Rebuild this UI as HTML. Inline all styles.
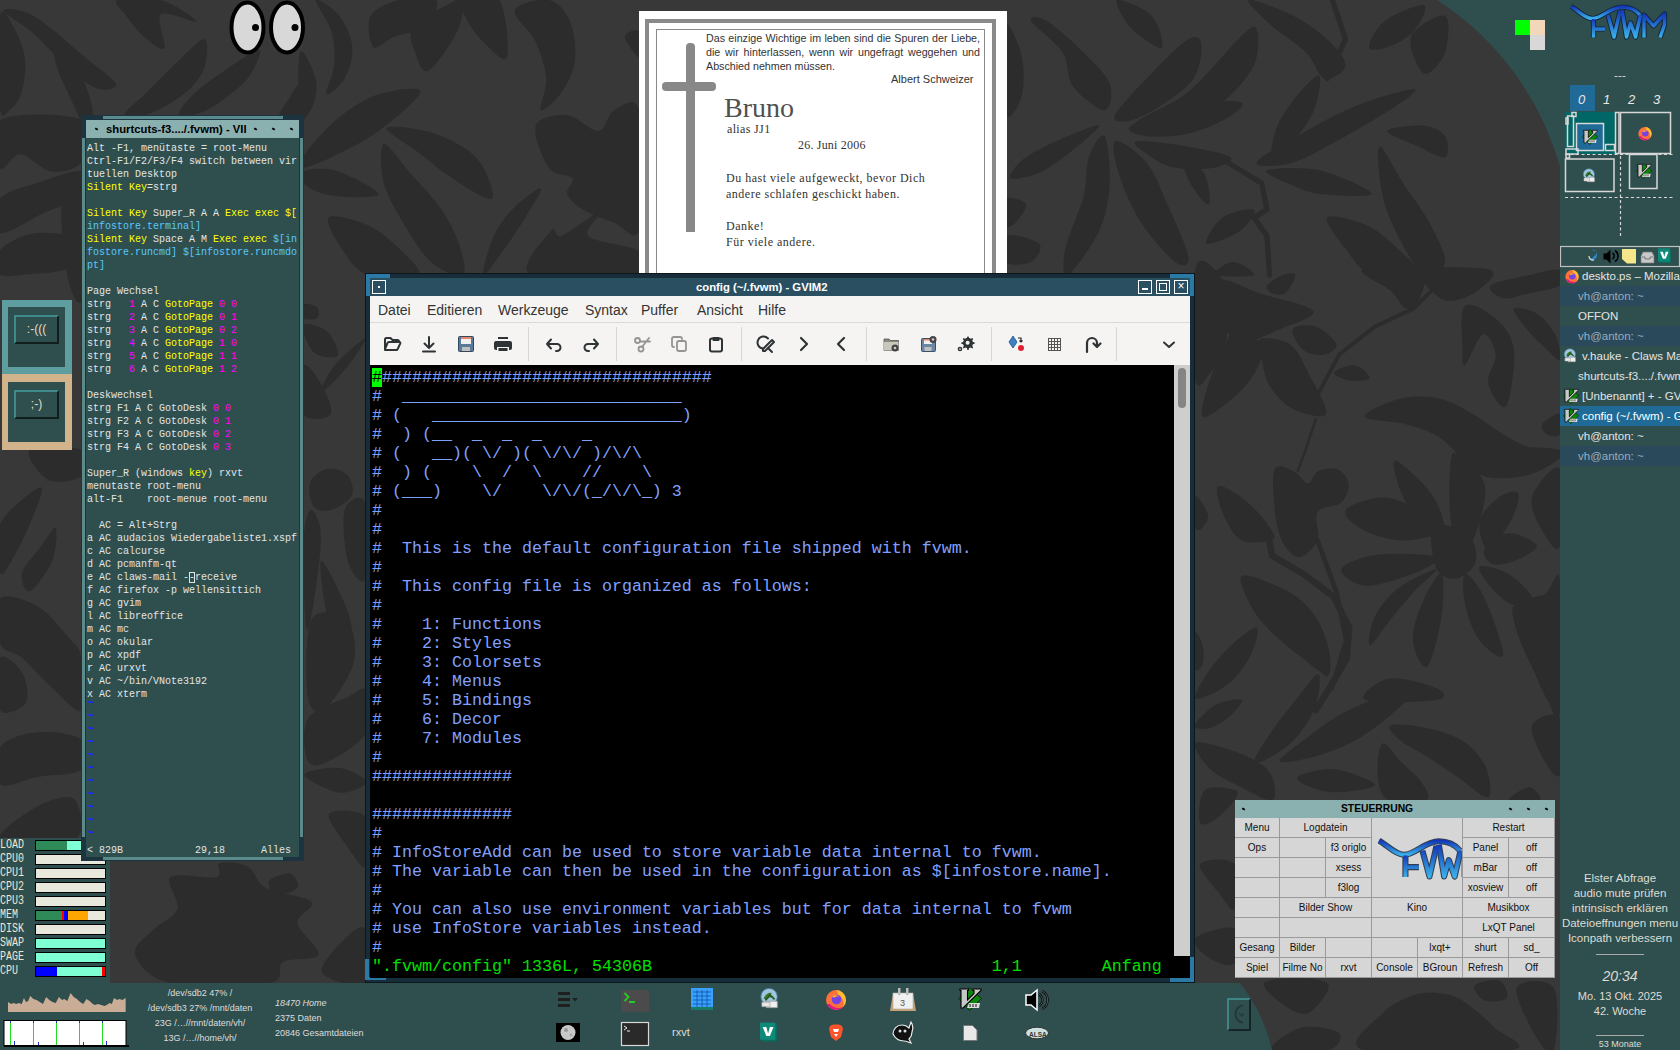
<!DOCTYPE html>
<html><head><meta charset="utf-8">
<style>
*{margin:0;padding:0;box-sizing:border-box}
html,body{width:1680px;height:1050px;overflow:hidden;background:#3a3a3a;font-family:"Liberation Sans",sans-serif}
.a{position:absolute}
i{font-style:normal}
.mono{font-family:"Liberation Mono",monospace}
/* gvim */
#gv{left:365px;top:273px;width:830px;height:710px;background:#172d39;box-shadow:inset 0 0 0 1px #0c161c}
#gvtitle{left:5px;top:5px;width:820px;height:18px;background:#2a4f60;color:#fff;font-weight:bold;font-size:11.3px;line-height:18px;padding-left:326px}
#gvmenu{left:5px;top:23px;width:820px;height:26px;background:#f5f4f2;font-size:14px;color:#333}
#gvmenu span{position:absolute;top:6px}
#gvtool{left:5px;top:49px;width:820px;height:43px;background:#f5f4f2;border-top:1px solid #dcdad6}
#gvtext{left:5px;top:92px;width:820px;height:613px;background:#000;color:#80a0ff;font-size:16.67px;line-height:19px;white-space:pre;padding:3px 0 0 2px;overflow:hidden}
#gvtext .cur{background:#00ff00;color:#000}
#gvtext .st{color:#00e000}
#gvscroll{left:809px;top:92px;width:16px;height:591px;background:#cecece}
/* terminal */
#tm{left:81px;top:115px;width:223px;height:746px;background:#1c3440}
#tmtitle{left:5px;top:5px;width:213px;height:18px;background:#8ab0b0;color:#000;font-weight:bold;font-size:11.3px;line-height:18px}
.tick{top:8px;width:3px;height:2px;background:#000;transform:rotate(30deg)}
#tmtext{left:5px;top:23px;width:213px;height:719px;background:#2f4f4f;color:#e4e4e4;font-size:10px;line-height:13px;white-space:pre;padding:4px 0 0 1px;overflow:hidden}
#tmtext .y{color:#ffff00}
#tmtext .c{color:#58c8ff}
#tmtext .m{color:#ff00ff}
#tmtext .b{color:#1e28ff;position:relative;top:-3px;font-weight:bold;font-size:12px}
#tmtext .tc{outline:1px solid #e4e4e4;outline-offset:-1px}
.sm{font-size:10px}
.lbl{font-family:"Liberation Mono",monospace;color:#efe6d0;font-size:13px;line-height:14px;transform:scaleX(0.77);transform-origin:0 0}
.bar{position:absolute;left:35px;width:71px;height:11px;border:1px solid #000;background:#e8e8dc}
/* steuerrung */
#st{left:1235px;top:800px;width:320px;height:178px;background:#a9a9a9}
#sttitle{left:0;top:0;width:320px;height:18px;background:#8ab0b0;color:#000;font-weight:bold;font-size:10.3px;line-height:18px;padding-left:106px}
.sb{position:absolute;background:#d6d6d6;border-right:1px solid #9a9a9a;border-bottom:1px solid #9a9a9a;font-size:10px;color:#111;text-align:center;line-height:19px;white-space:nowrap;overflow:hidden}
/* task list */
.tk{position:absolute;left:1560px;width:120px;height:20px;font-size:11.5px;line-height:20px;color:#e4e4e4;white-space:nowrap;overflow:hidden}
.rt{position:absolute;left:1560px;width:120px;text-align:center;color:#dedcd2;font-size:11.5px;white-space:nowrap;overflow:hidden}
</style></head><body>
<svg width="0" height="0" style="position:absolute">
<defs>
<symbol id="vim" viewBox="0 0 24 24">
<path d="M11.5,0.5 L23.5,11.5 L11.5,23.5 L0.5,11.5 Z" fill="#0a860a" stroke="#111" stroke-width="0.8"/>
<path d="M2,2 H10.5 V3.5 H9.5 V13 L16,6.5 V3.5 H15 V2 H23 V3.5 L5,21 H3 V3.5 H2 Z" fill="#c8c8c8" stroke="#000" stroke-width="1.1" stroke-linejoin="miter"/>
<path d="M11,16 H22 L21,21 H9 Z" fill="#ddd"/>
<path d="M12,17 v3 M15,17 v3 M18,17 v3" stroke="#111" stroke-width="1"/>
</symbol>
<symbol id="ffx" viewBox="0 0 24 24">
<circle cx="12" cy="13" r="10" fill="#ff7139"/>
<path d="M12,3 a10,10 0 0 1 10,10 a10,10 0 0 1 -3,7 c2,-5 -1,-11 -5,-12 c0,-2 -1,-4 -2,-5 z" fill="#ffbd2e"/>
<path d="M3,17 a10,10 0 0 0 16,3 c-4,2 -10,1 -13,-3 z" fill="#e31587"/>
<circle cx="12.5" cy="12.5" r="4.8" fill="#7542e5"/>
<path d="M8,9 c3,-2 6,-1 7,1 c-2,-1 -4,0 -5,1 z" fill="#ffa436"/>
</symbol>
<symbol id="claws" viewBox="0 0 24 24">
<circle cx="11" cy="10" r="9" fill="#9ec6e0" stroke="#4a7a9a" stroke-width="1"/>
<path d="M5,12 c2,-5 6,-7 9,-6 c-2,2 -1,4 2,4 c-3,1 -6,0 -8,3 z" fill="#3a7a2a"/>
<path d="M7,14 l5,-6 l5,5" fill="none" stroke="#2a5a20" stroke-width="2"/>
<path d="M8,15 h12 v7 h-12 z" fill="#f0f0f0" stroke="#999" stroke-width="0.8"/>
<path d="M3,16 h9 v5 h-9 z" fill="#e8e8e8" stroke="#888" stroke-width="0.6"/>
</symbol>
<symbol id="vicon" viewBox="0 0 20 22">
<rect x="2" y="2" width="17" height="19" fill="#0b6b5e"/>
<rect x="0" y="0" width="17" height="19" fill="#108a78"/>
<path d="M3,5 h4 l2,7 l2,-7 h4 l-4,10 h-4 z" fill="#fff"/>
</symbol>
</defs>
</svg>

<svg class="a" style="left:0;top:0" width="1680" height="1050" viewBox="0 0 1680 1050">
<rect width="1680" height="1050" fill="#383838"/>
<g id="pattern" fill="#2c2c2c"><g transform="translate(1195,270) scale(0.257136)"><path d="M90.0,40.0 C113.3,21.7 188.3,70.0 250.0,90.0 C311.7,110.0 446.7,136.7 460.0,160.0 C473.3,183.3 376.7,210.0 330.0,230.0 C283.3,250.0 216.7,285.0 180.0,280.0 C143.3,275.0 125.0,240.0 110.0,200.0 C95.0,160.0 66.7,58.3 90.0,40.0Z"/><path d="M160.0,230.0 C186.7,225.0 250.0,268.3 260.0,300.0 C270.0,331.7 243.3,383.3 220.0,420.0 C196.7,456.7 151.7,495.0 120.0,520.0 C88.3,545.0 41.7,581.7 30.0,570.0 C18.3,558.3 38.3,490.0 50.0,450.0 C61.7,410.0 81.7,366.7 100.0,330.0 C118.3,293.3 133.3,235.0 160.0,230.0Z"/><path d="M250.0,270.0 C268.3,260.0 338.3,268.3 370.0,290.0 C401.7,311.7 416.7,355.0 440.0,400.0 C463.3,445.0 520.0,536.7 510.0,560.0 C500.0,583.3 416.7,558.3 380.0,540.0 C343.3,521.7 310.0,481.7 290.0,450.0 C270.0,418.3 266.7,380.0 260.0,350.0 C253.3,320.0 231.7,280.0 250.0,270.0Z"/><path d="M380.0,230.0 C388.3,215.0 441.7,210.0 470.0,220.0 C498.3,230.0 545.0,271.7 550.0,290.0 C555.0,308.3 521.7,326.7 500.0,330.0 C478.3,333.3 440.0,326.7 420.0,310.0 C400.0,293.3 371.7,245.0 380.0,230.0Z"/><path d="M0.0,0.0 C13.3,-70.0 58.3,-20.0 80.0,0.0 C101.7,20.0 123.3,73.3 130.0,120.0 C136.7,166.7 131.7,233.3 120.0,280.0 C108.3,326.7 80.0,376.7 60.0,400.0 C40.0,423.3 10.0,486.7 0.0,420.0 C-10.0,353.3 -13.3,70.0 0.0,0.0Z"/><path d="M280.0,60.0 C286.7,48.3 321.7,26.7 340.0,20.0 C358.3,13.3 388.3,8.3 390.0,20.0 C391.7,31.7 365.0,78.3 350.0,90.0 C335.0,101.7 311.7,95.0 300.0,90.0 C288.3,85.0 273.3,71.7 280.0,60.0Z"/><path d="M540.0,400.0 C543.3,390.0 596.7,366.7 620.0,370.0 C643.3,373.3 683.3,410.0 680.0,420.0 C676.7,430.0 623.3,433.3 600.0,430.0 C576.7,426.7 536.7,410.0 540.0,400.0Z"/><path d="M650.0,0.0 C670.0,-13.3 843.3,-20.0 880.0,0.0 C916.7,20.0 880.0,95.0 870.0,120.0 C860.0,145.0 838.3,156.7 820.0,150.0 C801.7,143.3 788.3,105.0 760.0,80.0 C731.7,55.0 630.0,13.3 650.0,0.0Z"/><path d="M880.0,0.0 C916.7,-15.0 1113.3,-13.3 1150.0,0.0 C1186.7,13.3 1125.0,60.0 1100.0,80.0 C1075.0,100.0 1028.3,118.3 1000.0,120.0 C971.7,121.7 950.0,110.0 930.0,90.0 C910.0,70.0 843.3,15.0 880.0,0.0Z"/><path d="M1150.0,60.0 C1166.7,45.0 1255.0,30.0 1300.0,20.0 C1345.0,10.0 1400.0,-6.7 1420.0,0.0 C1440.0,6.7 1440.0,45.0 1420.0,60.0 C1400.0,75.0 1336.7,81.7 1300.0,90.0 C1263.3,98.3 1225.0,115.0 1200.0,110.0 C1175.0,105.0 1133.3,75.0 1150.0,60.0Z"/><path d="M1050.0,140.0 C1071.7,121.7 1138.3,161.7 1170.0,190.0 C1201.7,218.3 1233.3,253.3 1240.0,310.0 C1246.7,366.7 1226.7,508.3 1210.0,530.0 C1193.3,551.7 1146.7,473.3 1140.0,440.0 C1133.3,406.7 1173.3,361.7 1170.0,330.0 C1166.7,298.3 1140.0,243.3 1120.0,250.0 C1100.0,256.7 1063.3,361.7 1050.0,370.0 C1036.7,378.3 1040.0,338.3 1040.0,300.0 C1040.0,261.7 1028.3,158.3 1050.0,140.0Z"/><path d="M1240.0,150.0 C1246.7,140.0 1303.3,153.3 1330.0,170.0 C1356.7,186.7 1385.0,220.0 1400.0,250.0 C1415.0,280.0 1426.7,341.7 1420.0,350.0 C1413.3,358.3 1381.7,320.0 1360.0,300.0 C1338.3,280.0 1310.0,255.0 1290.0,230.0 C1270.0,205.0 1233.3,160.0 1240.0,150.0Z"/><path d="M660.0,570.0 C656.7,553.3 751.7,511.7 800.0,500.0 C848.3,488.3 903.3,490.0 950.0,500.0 C996.7,510.0 1038.3,536.7 1080.0,560.0 C1121.7,583.3 1163.3,618.3 1200.0,640.0 C1236.7,661.7 1266.7,680.0 1300.0,690.0 C1333.3,700.0 1400.0,688.3 1400.0,700.0 C1400.0,711.7 1341.7,745.0 1300.0,760.0 C1258.3,775.0 1191.7,793.3 1150.0,790.0 C1108.3,786.7 1083.3,763.3 1050.0,740.0 C1016.7,716.7 988.3,673.3 950.0,650.0 C911.7,626.7 868.3,613.3 820.0,600.0 C771.7,586.7 663.3,586.7 660.0,570.0Z"/><path d="M1350.0,600.0 C1358.3,586.7 1408.3,553.3 1420.0,560.0 C1431.7,566.7 1428.3,626.7 1420.0,640.0 C1411.7,653.3 1381.7,646.7 1370.0,640.0 C1358.3,633.3 1341.7,613.3 1350.0,600.0Z"/><path d="M90.0,840.0 C105.0,831.7 166.7,873.3 200.0,900.0 C233.3,926.7 273.3,975.0 290.0,1000.0 C306.7,1025.0 318.3,1041.7 300.0,1050.0 C281.7,1058.3 211.7,1066.7 180.0,1050.0 C148.3,1033.3 125.0,985.0 110.0,950.0 C95.0,915.0 75.0,848.3 90.0,840.0Z"/><path d="M0.0,880.0 C8.3,871.7 45.0,930.0 50.0,950.0 C55.0,970.0 38.3,991.7 30.0,1000.0 C21.7,1008.3 5.0,1020.0 0.0,1000.0 C-5.0,980.0 -8.3,888.3 0.0,880.0Z"/><path d="M480,480 L560,330 L700,220 L850,150 L940,60 L1000,0" fill="none" stroke="#2c2c2c" stroke-width="15" stroke-linecap="round" stroke-linejoin="round"/><path d="M470,580 L430,700 L400,780" fill="none" stroke="#2c2c2c" stroke-width="10" stroke-linecap="round" stroke-linejoin="round"/></g>
<g transform="translate(1195,530) scale(0.257136)"><path d="M1240.0,300.0 C1250.0,258.3 1330.0,266.7 1360.0,250.0 C1390.0,233.3 1410.0,125.0 1420.0,200.0 C1430.0,275.0 1428.3,623.3 1420.0,700.0 C1411.7,776.7 1390.0,693.3 1370.0,660.0 C1350.0,626.7 1321.7,560.0 1300.0,500.0 C1278.3,440.0 1230.0,341.7 1240.0,300.0Z"/><path d="M180.0,180.0 C193.3,165.0 260.0,193.3 300.0,210.0 C340.0,226.7 386.7,248.3 420.0,280.0 C453.3,311.7 483.3,353.3 500.0,400.0 C516.7,446.7 533.3,543.3 520.0,560.0 C506.7,576.7 456.7,526.7 420.0,500.0 C383.3,473.3 333.3,433.3 300.0,400.0 C266.7,366.7 240.0,336.7 220.0,300.0 C200.0,263.3 166.7,195.0 180.0,180.0Z"/><path d="M0.0,650.0 C0.0,633.3 35.0,575.0 60.0,540.0 C85.0,505.0 120.0,466.7 150.0,440.0 C180.0,413.3 228.3,373.3 240.0,380.0 C251.7,386.7 235.0,446.7 220.0,480.0 C205.0,513.3 176.7,553.3 150.0,580.0 C123.3,606.7 85.0,628.3 60.0,640.0 C35.0,651.7 0.0,666.7 0.0,650.0Z"/><path d="M0.0,400.0 C5.0,385.0 25.0,430.0 30.0,450.0 C35.0,470.0 35.0,505.0 30.0,520.0 C25.0,535.0 5.0,560.0 0.0,540.0 C-5.0,520.0 -5.0,415.0 0.0,400.0Z"/><path d="M0.0,760.0 C3.3,745.0 50.0,696.7 80.0,680.0 C110.0,663.3 170.0,653.3 180.0,660.0 C190.0,666.7 160.0,701.7 140.0,720.0 C120.0,738.3 83.3,763.3 60.0,770.0 C36.7,776.7 -3.3,775.0 0.0,760.0Z"/><path d="M480.0,560.0 C491.7,565.0 483.3,640.0 470.0,680.0 C456.7,720.0 428.3,766.7 400.0,800.0 C371.7,833.3 328.3,863.3 300.0,880.0 C271.7,896.7 230.0,916.7 230.0,900.0 C230.0,883.3 271.7,821.7 300.0,780.0 C328.3,738.3 370.0,686.7 400.0,650.0 C430.0,613.3 468.3,555.0 480.0,560.0Z"/><path d="M870.0,610.0 C863.3,598.3 771.7,631.7 720.0,650.0 C668.3,668.3 610.0,691.7 560.0,720.0 C510.0,748.3 458.3,790.0 420.0,820.0 C381.7,850.0 321.7,890.0 330.0,900.0 C338.3,910.0 421.7,893.3 470.0,880.0 C518.3,866.7 571.7,846.7 620.0,820.0 C668.3,793.3 718.3,755.0 760.0,720.0 C801.7,685.0 876.7,621.7 870.0,610.0Z"/><path d="M0.0,830.0 C10.0,816.7 80.0,838.3 120.0,850.0 C160.0,861.7 210.0,881.7 240.0,900.0 C270.0,918.3 290.0,935.0 300.0,960.0 C310.0,985.0 320.0,1043.3 300.0,1050.0 C280.0,1056.7 220.0,1020.0 180.0,1000.0 C140.0,980.0 90.0,958.3 60.0,930.0 C30.0,901.7 -10.0,843.3 0.0,830.0Z"/><path d="M400.0,960.0 C415.0,948.3 490.0,925.0 540.0,930.0 C590.0,935.0 696.7,975.0 700.0,990.0 C703.3,1005.0 601.7,1018.3 560.0,1020.0 C518.3,1021.7 476.7,1010.0 450.0,1000.0 C423.3,990.0 385.0,971.7 400.0,960.0Z"/><path d="M730.0,830.0 C745.0,821.7 775.0,875.0 800.0,900.0 C825.0,925.0 863.3,955.0 880.0,980.0 C896.7,1005.0 921.7,1038.3 900.0,1050.0 C878.3,1061.7 781.7,1066.7 750.0,1050.0 C718.3,1033.3 713.3,986.7 710.0,950.0 C706.7,913.3 715.0,838.3 730.0,830.0Z"/><path d="M760.0,760.0 C776.7,751.7 853.3,760.0 900.0,770.0 C946.7,780.0 1001.7,795.0 1040.0,820.0 C1078.3,845.0 1113.3,883.3 1130.0,920.0 C1146.7,956.7 1158.3,1033.3 1140.0,1040.0 C1121.7,1046.7 1060.0,986.7 1020.0,960.0 C980.0,933.3 936.7,903.3 900.0,880.0 C863.3,856.7 823.3,840.0 800.0,820.0 C776.7,800.0 743.3,768.3 760.0,760.0Z"/><path d="M1310.0,760.0 C1320.0,731.7 1401.7,698.3 1420.0,730.0 C1438.3,761.7 1430.0,921.7 1420.0,950.0 C1410.0,978.3 1378.3,931.7 1360.0,900.0 C1341.7,868.3 1300.0,788.3 1310.0,760.0Z"/><path d="M1220.0,1050.0 C1213.3,1041.7 1280.0,1000.0 1300.0,1000.0 C1320.0,1000.0 1353.3,1041.7 1340.0,1050.0 C1326.7,1058.3 1226.7,1058.3 1220.0,1050.0Z"/><path d="M280,0 L300,100 L420,170 L540,260 L600,380 L590,500 L520,620 L470,700" fill="none" stroke="#2c2c2c" stroke-width="25" stroke-linecap="round" stroke-linejoin="round"/></g>
<g transform="translate(1005,0) scale(0.261917)"><path d="M420.0,440.0 C433.3,410.0 513.3,328.3 560.0,280.0 C606.7,231.7 668.3,168.3 700.0,150.0 C731.7,131.7 746.7,145.0 750.0,170.0 C753.3,195.0 745.0,261.7 720.0,300.0 C695.0,338.3 640.0,373.3 600.0,400.0 C560.0,426.7 510.0,453.3 480.0,460.0 C450.0,466.7 406.7,470.0 420.0,440.0Z"/><path d="M500.0,470.0 C508.3,446.7 633.3,405.0 700.0,350.0 C766.7,295.0 856.7,180.0 900.0,140.0 C943.3,100.0 951.7,91.7 960.0,110.0 C968.3,128.3 973.3,201.7 950.0,250.0 C926.7,298.3 870.0,360.0 820.0,400.0 C770.0,440.0 703.3,478.3 650.0,490.0 C596.7,501.7 491.7,493.3 500.0,470.0Z"/><path d="M480.0,480.0 C506.7,460.0 630.0,415.0 700.0,400.0 C770.0,385.0 875.0,381.7 900.0,390.0 C925.0,398.3 883.3,430.0 850.0,450.0 C816.7,470.0 751.7,498.3 700.0,510.0 C648.3,521.7 576.7,525.0 540.0,520.0 C503.3,515.0 453.3,500.0 480.0,480.0Z"/><path d="M500.0,540.0 C523.3,533.3 640.0,550.0 700.0,560.0 C760.0,570.0 843.3,586.7 860.0,600.0 C876.7,613.3 835.0,633.3 800.0,640.0 C765.0,646.7 690.0,646.7 650.0,640.0 C610.0,633.3 585.0,616.7 560.0,600.0 C535.0,583.3 476.7,546.7 500.0,540.0Z"/><path d="M420.0,540.0 C436.7,530.0 506.7,580.0 540.0,620.0 C573.3,660.0 593.3,720.0 620.0,780.0 C646.7,840.0 695.0,943.3 700.0,980.0 C705.0,1016.7 680.0,1021.7 650.0,1000.0 C620.0,978.3 555.0,903.3 520.0,850.0 C485.0,796.7 456.7,731.7 440.0,680.0 C423.3,628.3 403.3,550.0 420.0,540.0Z"/><path d="M380.0,520.0 C393.3,536.7 403.3,640.0 400.0,700.0 C396.7,760.0 386.7,821.7 360.0,880.0 C333.3,938.3 261.7,1038.3 240.0,1050.0 C218.3,1061.7 220.0,1000.0 230.0,950.0 C240.0,900.0 285.0,808.3 300.0,750.0 C315.0,691.7 306.7,638.3 320.0,600.0 C333.3,561.7 366.7,503.3 380.0,520.0Z"/><path d="M360.0,480.0 C361.7,490.0 288.3,550.0 250.0,580.0 C211.7,610.0 168.3,643.3 130.0,660.0 C91.7,676.7 28.3,690.0 20.0,680.0 C11.7,670.0 43.3,626.7 80.0,600.0 C116.7,573.3 193.3,540.0 240.0,520.0 C286.7,500.0 358.3,470.0 360.0,480.0Z"/><path d="M380.0,420.0 C356.7,421.7 286.7,366.7 260.0,330.0 C233.3,293.3 246.7,241.7 220.0,200.0 C193.3,158.3 110.0,100.0 100.0,80.0 C90.0,60.0 126.7,60.0 160.0,80.0 C193.3,100.0 260.0,160.0 300.0,200.0 C340.0,240.0 386.7,283.3 400.0,320.0 C413.3,356.7 403.3,418.3 380.0,420.0Z"/><path d="M430.0,0.0 C446.7,-3.3 531.7,30.0 560.0,60.0 C588.3,90.0 606.7,166.7 600.0,180.0 C593.3,193.3 543.3,156.7 520.0,140.0 C496.7,123.3 475.0,103.3 460.0,80.0 C445.0,56.7 413.3,3.3 430.0,0.0Z"/><path d="M0.0,100.0 C10.0,63.3 48.3,161.7 60.0,200.0 C71.7,238.3 73.3,293.3 70.0,330.0 C66.7,366.7 51.7,405.0 40.0,420.0 C28.3,435.0 6.7,473.3 0.0,420.0 C-6.7,366.7 -10.0,136.7 0.0,100.0Z"/><path d="M0.0,760.0 C13.3,746.7 73.3,765.0 80.0,780.0 C86.7,795.0 53.3,836.7 40.0,850.0 C26.7,863.3 6.7,875.0 0.0,860.0 C-6.7,845.0 -13.3,773.3 0.0,760.0Z"/><path d="M0.0,900.0 C21.7,888.3 113.3,913.3 130.0,930.0 C146.7,946.7 121.7,988.3 100.0,1000.0 C78.3,1011.7 16.7,1016.7 0.0,1000.0 C-16.7,983.3 -21.7,911.7 0.0,900.0Z"/><path d="M960.0,620.0 C968.3,600.0 1085.0,536.7 1150.0,500.0 C1215.0,463.3 1281.7,426.7 1350.0,400.0 C1418.3,373.3 1535.0,340.0 1560.0,340.0 C1585.0,340.0 1543.3,370.0 1500.0,400.0 C1456.7,430.0 1366.7,483.3 1300.0,520.0 C1233.3,556.7 1156.7,603.3 1100.0,620.0 C1043.3,636.7 951.7,640.0 960.0,620.0Z"/><path d="M1200.0,290.0 C1210.0,300.0 1196.7,378.3 1180.0,420.0 C1163.3,461.7 1126.7,510.0 1100.0,540.0 C1073.3,570.0 1030.0,610.0 1020.0,600.0 C1010.0,590.0 1023.3,520.0 1040.0,480.0 C1056.7,440.0 1093.3,391.7 1120.0,360.0 C1146.7,328.3 1190.0,280.0 1200.0,290.0Z"/><path d="M930.0,0.0 C943.3,-6.7 1050.0,35.0 1100.0,60.0 C1150.0,85.0 1196.7,118.3 1230.0,150.0 C1263.3,181.7 1301.7,225.0 1300.0,250.0 C1298.3,275.0 1245.0,308.3 1220.0,300.0 C1195.0,291.7 1183.3,233.3 1150.0,200.0 C1116.7,166.7 1056.7,133.3 1020.0,100.0 C983.3,66.7 916.7,6.7 930.0,0.0Z"/><path d="M1390.0,180.0 C1388.3,163.3 1415.0,106.7 1450.0,80.0 C1485.0,53.3 1581.7,13.3 1600.0,20.0 C1618.3,26.7 1583.3,93.3 1560.0,120.0 C1536.7,146.7 1488.3,170.0 1460.0,180.0 C1431.7,190.0 1391.7,196.7 1390.0,180.0Z"/><path d="M1550.0,140.0 C1563.3,103.3 1658.3,50.0 1680.0,60.0 C1701.7,70.0 1693.3,163.3 1680.0,200.0 C1666.7,236.7 1621.7,290.0 1600.0,280.0 C1578.3,270.0 1536.7,176.7 1550.0,140.0Z"/><path d="M1430.0,560.0 C1443.3,553.3 1488.3,651.7 1520.0,700.0 C1551.7,748.3 1593.3,800.0 1620.0,850.0 C1646.7,900.0 1683.3,966.7 1680.0,1000.0 C1676.7,1033.3 1630.0,1066.7 1600.0,1050.0 C1570.0,1033.3 1526.7,951.7 1500.0,900.0 C1473.3,848.3 1451.7,796.7 1440.0,740.0 C1428.3,683.3 1416.7,566.7 1430.0,560.0Z"/><path d="M1230.0,830.0 C1243.3,815.0 1335.0,840.0 1380.0,860.0 C1425.0,880.0 1466.7,918.3 1500.0,950.0 C1533.3,981.7 1596.7,1033.3 1580.0,1050.0 C1563.3,1066.7 1446.7,1066.7 1400.0,1050.0 C1353.3,1033.3 1328.3,986.7 1300.0,950.0 C1271.7,913.3 1216.7,845.0 1230.0,830.0Z"/><path d="M1000.0,650.0 C1020.0,641.7 1133.3,635.0 1200.0,650.0 C1266.7,665.0 1400.0,725.0 1400.0,740.0 C1400.0,755.0 1253.3,746.7 1200.0,740.0 C1146.7,733.3 1113.3,715.0 1080.0,700.0 C1046.7,685.0 980.0,658.3 1000.0,650.0Z"/><path d="M1460.0,500.0 C1463.3,486.7 1563.3,476.7 1600.0,480.0 C1636.7,483.3 1666.7,500.0 1680.0,520.0 C1693.3,540.0 1696.7,593.3 1680.0,600.0 C1663.3,606.7 1616.7,576.7 1580.0,560.0 C1543.3,543.3 1456.7,513.3 1460.0,500.0Z"/><path d="M770.0,930.0 C758.3,921.7 800.0,851.7 830.0,830.0 C860.0,808.3 938.3,791.7 950.0,800.0 C961.7,808.3 930.0,858.3 900.0,880.0 C870.0,901.7 781.7,938.3 770.0,930.0Z"/><path d="M680.0,620.0 C686.7,610.0 743.3,633.3 760.0,660.0 C776.7,686.7 786.7,770.0 780.0,780.0 C773.3,790.0 736.7,746.7 720.0,720.0 C703.3,693.3 673.3,630.0 680.0,620.0Z"/><path d="M800.0,1050.0 C786.7,1041.7 845.0,1000.0 870.0,1000.0 C895.0,1000.0 961.7,1041.7 950.0,1050.0 C938.3,1058.3 813.3,1058.3 800.0,1050.0Z"/><path d="M1250,0 L1300,150 L1230,300" fill="none" stroke="#2c2c2c" stroke-width="20" stroke-linecap="round" stroke-linejoin="round"/><path d="M850,620 L980,700 L1000,800 L950,830 L1000,900 L1010,1050" fill="none" stroke="#2c2c2c" stroke-width="20" stroke-linecap="round" stroke-linejoin="round"/></g>
<g transform="translate(300,0) scale(0.261917)"><path d="M60.0,0.0 C65.0,-10.0 126.7,30.0 150.0,60.0 C173.3,90.0 196.7,140.0 200.0,180.0 C203.3,220.0 186.7,270.0 170.0,300.0 C153.3,330.0 106.7,368.3 100.0,360.0 C93.3,351.7 126.7,290.0 130.0,250.0 C133.3,210.0 131.7,161.7 120.0,120.0 C108.3,78.3 55.0,10.0 60.0,0.0Z"/><path d="M0.0,200.0 C10.0,175.0 51.7,266.7 60.0,300.0 C68.3,333.3 60.0,375.0 50.0,400.0 C40.0,425.0 8.3,483.3 0.0,450.0 C-8.3,416.7 -10.0,225.0 0.0,200.0Z"/><path d="M270.0,60.0 C286.7,30.0 338.3,10.0 380.0,0.0 C421.7,-10.0 503.3,-16.7 520.0,0.0 C536.7,16.7 506.7,76.7 480.0,100.0 C453.3,123.3 393.3,126.7 360.0,140.0 C326.7,153.3 295.0,193.3 280.0,180.0 C265.0,166.7 253.3,90.0 270.0,60.0Z"/><path d="M430.0,100.0 C450.0,70.0 528.3,36.7 560.0,20.0 C591.7,3.3 613.3,-16.7 620.0,0.0 C626.7,16.7 621.7,75.0 600.0,120.0 C578.3,165.0 516.7,256.7 490.0,270.0 C463.3,283.3 450.0,228.3 440.0,200.0 C430.0,171.7 410.0,130.0 430.0,100.0Z"/><path d="M620.0,0.0 C640.0,-13.3 731.7,-36.7 760.0,0.0 C788.3,36.7 800.0,193.3 790.0,220.0 C780.0,246.7 725.0,183.3 700.0,160.0 C675.0,136.7 653.3,106.7 640.0,80.0 C626.7,53.3 600.0,13.3 620.0,0.0Z"/><path d="M820.0,40.0 C828.3,13.3 915.0,-6.7 950.0,0.0 C985.0,6.7 1013.3,41.7 1030.0,80.0 C1046.7,118.3 1055.0,185.0 1050.0,230.0 C1045.0,275.0 1021.7,318.3 1000.0,350.0 C978.3,381.7 930.0,428.3 920.0,420.0 C910.0,411.7 943.3,343.3 940.0,300.0 C936.7,256.7 920.0,203.3 900.0,160.0 C880.0,116.7 811.7,66.7 820.0,40.0Z"/><path d="M1240.0,140.0 C1240.0,123.3 1288.3,106.7 1298.0,120.0 C1307.7,133.3 1307.7,216.7 1298.0,220.0 C1288.3,223.3 1240.0,156.7 1240.0,140.0Z"/><path d="M460.0,350.0 C460.0,326.7 350.0,345.0 300.0,360.0 C250.0,375.0 203.3,406.7 160.0,440.0 C116.7,473.3 66.7,526.7 40.0,560.0 C13.3,593.3 -13.3,633.3 0.0,640.0 C13.3,646.7 70.0,623.3 120.0,600.0 C170.0,576.7 243.3,541.7 300.0,500.0 C356.7,458.3 460.0,373.3 460.0,350.0Z"/><path d="M330.0,490.0 C335.0,476.7 431.7,488.3 480.0,500.0 C528.3,511.7 583.3,536.7 620.0,560.0 C656.7,583.3 681.7,606.7 700.0,640.0 C718.3,673.3 750.0,753.3 730.0,760.0 C710.0,766.7 626.7,710.0 580.0,680.0 C533.3,650.0 491.7,611.7 450.0,580.0 C408.3,548.3 325.0,503.3 330.0,490.0Z"/><path d="M0.0,660.0 C15.0,648.3 80.0,636.7 130.0,650.0 C180.0,663.3 296.7,723.3 300.0,740.0 C303.3,756.7 193.3,753.3 150.0,750.0 C106.7,746.7 65.0,735.0 40.0,720.0 C15.0,705.0 -15.0,671.7 0.0,660.0Z"/><path d="M320.0,550.0 C336.7,543.3 383.3,618.3 420.0,660.0 C456.7,701.7 508.3,753.3 540.0,800.0 C571.7,846.7 596.7,898.3 610.0,940.0 C623.3,981.7 638.3,1040.0 620.0,1050.0 C601.7,1060.0 536.7,1031.7 500.0,1000.0 C463.3,968.3 430.0,910.0 400.0,860.0 C370.0,810.0 333.3,751.7 320.0,700.0 C306.7,648.3 303.3,556.7 320.0,550.0Z"/><path d="M110.0,830.0 C126.7,815.0 213.3,838.3 260.0,860.0 C306.7,881.7 358.3,928.3 390.0,960.0 C421.7,991.7 471.7,1035.0 450.0,1050.0 C428.3,1065.0 308.3,1066.7 260.0,1050.0 C211.7,1033.3 185.0,986.7 160.0,950.0 C135.0,913.3 93.3,845.0 110.0,830.0Z"/><path d="M900.0,480.0 C911.7,446.7 980.0,436.7 1020.0,440.0 C1060.0,443.3 1110.0,503.3 1140.0,500.0 C1170.0,496.7 1173.7,431.7 1200.0,420.0 C1226.3,408.3 1281.7,355.0 1298.0,430.0 C1314.3,505.0 1314.3,800.0 1298.0,870.0 C1281.7,940.0 1236.3,861.7 1200.0,850.0 C1163.7,838.3 1110.0,818.3 1080.0,800.0 C1050.0,781.7 1026.7,760.0 1020.0,740.0 C1013.3,720.0 1051.7,696.7 1040.0,680.0 C1028.3,663.3 973.3,673.3 950.0,640.0 C926.7,606.7 888.3,513.3 900.0,480.0Z"/><path d="M920.0,720.0 C926.7,726.7 883.3,791.7 860.0,830.0 C836.7,868.3 806.7,913.3 780.0,950.0 C753.3,986.7 706.7,1058.3 700.0,1050.0 C693.3,1041.7 720.0,943.3 740.0,900.0 C760.0,856.7 790.0,820.0 820.0,790.0 C850.0,760.0 913.3,713.3 920.0,720.0Z"/><path d="M880.0,1050.0 C823.7,1021.7 940.0,905.0 960.0,880.0 C980.0,855.0 966.7,913.3 1000.0,900.0 C1033.3,886.7 1143.3,800.0 1160.0,800.0 C1176.7,800.0 1077.0,873.3 1100.0,900.0 C1123.0,926.7 1265.0,935.0 1298.0,960.0 C1331.0,985.0 1367.7,1035.0 1298.0,1050.0 C1228.3,1065.0 936.3,1078.3 880.0,1050.0Z"/></g>
<g transform="translate(0,0) scale(0.178571)"><path d="M0.0,90.0 C13.3,16.7 56.7,120.0 80.0,160.0 C103.3,200.0 133.3,270.0 140.0,330.0 C146.7,390.0 135.0,471.7 120.0,520.0 C105.0,568.3 70.0,606.7 50.0,620.0 C30.0,633.3 8.3,688.3 0.0,600.0 C-8.3,511.7 -13.3,163.3 0.0,90.0Z"/><path d="M20.0,60.0 C15.0,41.7 103.3,51.7 150.0,70.0 C196.7,88.3 250.0,131.7 300.0,170.0 C350.0,208.3 400.0,258.3 450.0,300.0 C500.0,341.7 566.7,390.0 600.0,420.0 C633.3,450.0 656.7,466.7 650.0,480.0 C643.3,493.3 598.3,510.0 560.0,500.0 C521.7,490.0 463.3,453.3 420.0,420.0 C376.7,386.7 340.0,340.0 300.0,300.0 C260.0,260.0 226.7,220.0 180.0,180.0 C133.3,140.0 25.0,78.3 20.0,60.0Z"/><path d="M300.0,220.0 C313.3,211.7 370.0,286.7 400.0,330.0 C430.0,373.3 460.0,428.3 480.0,480.0 C500.0,531.7 521.7,603.3 520.0,640.0 C518.3,676.7 490.0,713.3 470.0,700.0 C450.0,686.7 425.0,613.3 400.0,560.0 C375.0,506.7 336.7,436.7 320.0,380.0 C303.3,323.3 286.7,228.3 300.0,220.0Z"/><path d="M660.0,0.0 C693.3,-13.3 826.7,-20.0 900.0,0.0 C973.3,20.0 1100.0,106.7 1100.0,120.0 C1100.0,133.3 930.0,55.0 900.0,80.0 C870.0,105.0 936.7,250.0 920.0,270.0 C903.3,290.0 836.7,231.7 800.0,200.0 C763.3,168.3 723.3,113.3 700.0,80.0 C676.7,46.7 626.7,13.3 660.0,0.0Z"/><path d="M1140.0,220.0 C1171.7,216.7 1160.0,316.7 1150.0,360.0 C1140.0,403.3 1113.3,443.3 1080.0,480.0 C1046.7,516.7 996.7,551.7 950.0,580.0 C903.3,608.3 841.7,640.0 800.0,650.0 C758.3,660.0 696.7,661.7 700.0,640.0 C703.3,618.3 776.7,563.3 820.0,520.0 C863.3,476.7 906.7,430.0 960.0,380.0 C1013.3,330.0 1108.3,223.3 1140.0,220.0Z"/><path d="M1450.0,280.0 C1475.0,283.3 1425.0,380.0 1400.0,420.0 C1375.0,460.0 1341.7,486.7 1300.0,520.0 C1258.3,553.3 1200.0,598.3 1150.0,620.0 C1100.0,641.7 1011.7,665.0 1000.0,650.0 C988.3,635.0 1038.3,571.7 1080.0,530.0 C1121.7,488.3 1188.3,441.7 1250.0,400.0 C1311.7,358.3 1425.0,276.7 1450.0,280.0Z"/><path d="M1560.0,650.0 C1570.0,620.3 1600.0,578.3 1620.0,550.0 C1640.0,521.7 1670.0,450.3 1680.0,480.0 C1690.0,509.7 1700.0,686.7 1680.0,728.0 C1660.0,769.3 1580.0,741.0 1560.0,728.0 C1540.0,715.0 1550.0,679.7 1560.0,650.0Z"/></g>
<g transform="translate(0,120) scale(0.342818)"><path d="M0.0,0.0 C40.0,-23.3 200.0,-20.0 240.0,0.0 C280.0,20.0 255.0,95.0 240.0,120.0 C225.0,145.0 180.0,153.3 150.0,150.0 C120.0,146.7 85.0,101.7 60.0,100.0 C35.0,98.3 10.0,156.7 0.0,140.0 C-10.0,123.3 -40.0,23.3 0.0,0.0Z"/><path d="M0.0,230.0 C20.0,205.0 80.0,193.3 120.0,180.0 C160.0,166.7 220.0,143.3 240.0,150.0 C260.0,156.7 258.3,200.0 240.0,220.0 C221.7,240.0 170.0,251.7 130.0,270.0 C90.0,288.3 21.7,336.7 0.0,330.0 C-21.7,323.3 -20.0,255.0 0.0,230.0Z"/><path d="M0.0,380.0 C16.7,360.0 61.7,335.0 100.0,330.0 C138.3,325.0 213.3,333.3 230.0,350.0 C246.7,366.7 225.0,413.3 200.0,430.0 C175.0,446.7 113.3,446.7 80.0,450.0 C46.7,453.3 13.3,461.7 0.0,450.0 C-13.3,438.3 -16.7,400.0 0.0,380.0Z"/><path d="M180.0,250.0 C186.7,211.7 230.0,195.0 240.0,240.0 C250.0,285.0 246.7,481.7 240.0,520.0 C233.3,558.3 210.0,515.0 200.0,470.0 C190.0,425.0 173.3,288.3 180.0,250.0Z"/></g>
<g transform="translate(0,450) scale(0.371471)"><path d="M80.0,0.0 C95.0,-13.3 196.7,-11.7 220.0,0.0 C243.3,11.7 235.0,56.7 220.0,70.0 C205.0,83.3 153.3,91.7 130.0,80.0 C106.7,68.3 65.0,13.3 80.0,0.0Z"/><path d="M110.0,100.0 C123.3,100.0 93.3,166.7 80.0,200.0 C66.7,233.3 43.3,278.3 30.0,300.0 C16.7,321.7 5.0,346.7 0.0,330.0 C-5.0,313.3 -18.3,238.3 0.0,200.0 C18.3,161.7 96.7,100.0 110.0,100.0Z"/><path d="M150.0,210.0 C155.0,216.7 151.7,271.7 140.0,300.0 C128.3,328.3 93.3,375.0 80.0,380.0 C66.7,385.0 55.0,350.0 60.0,330.0 C65.0,310.0 95.0,280.0 110.0,260.0 C125.0,240.0 145.0,203.3 150.0,210.0Z"/><path d="M0.0,400.0 C16.7,383.3 70.0,403.3 100.0,420.0 C130.0,436.7 160.0,476.7 180.0,500.0 C200.0,523.3 213.3,526.7 220.0,560.0 C226.7,593.3 233.3,686.7 220.0,700.0 C206.7,713.3 166.7,663.3 140.0,640.0 C113.3,616.7 83.3,580.0 60.0,560.0 C36.7,540.0 10.0,546.7 0.0,520.0 C-10.0,493.3 -16.7,416.7 0.0,400.0Z"/><path d="M0.0,560.0 C10.0,543.3 48.3,580.0 60.0,600.0 C71.7,620.0 80.0,663.3 70.0,680.0 C60.0,696.7 11.7,720.0 0.0,700.0 C-11.7,680.0 -10.0,576.7 0.0,560.0Z"/><path d="M0.0,800.0 C16.7,776.7 63.3,763.3 100.0,760.0 C136.7,756.7 200.0,763.3 220.0,780.0 C240.0,796.7 240.0,843.3 220.0,860.0 C200.0,876.7 136.7,873.3 100.0,880.0 C63.3,886.7 16.7,913.3 0.0,900.0 C-16.7,886.7 -16.7,823.3 0.0,800.0Z"/><path d="M0.0,1050.0 C-16.7,1035.0 66.7,978.3 100.0,960.0 C133.3,941.7 183.3,925.0 200.0,940.0 C216.7,955.0 233.3,1031.7 200.0,1050.0 C166.7,1068.3 16.7,1065.0 0.0,1050.0Z"/></g>
<g transform="translate(300,270) scale(0.342818)"><path d="M10.0,100.0 C16.7,95.0 43.3,103.3 50.0,110.0 C56.7,116.7 56.7,135.0 50.0,140.0 C43.3,145.0 16.7,146.7 10.0,140.0 C3.3,133.3 3.3,105.0 10.0,100.0Z"/><path d="M10.0,160.0 C16.7,150.0 63.3,165.0 80.0,180.0 C96.7,195.0 116.7,240.0 110.0,250.0 C103.3,260.0 56.7,255.0 40.0,240.0 C23.3,225.0 3.3,170.0 10.0,160.0Z"/><path d="M190.0,200.0 C196.7,200.0 161.7,253.3 140.0,280.0 C118.3,306.7 66.7,360.0 60.0,360.0 C53.3,360.0 78.3,306.7 100.0,280.0 C121.7,253.3 183.3,200.0 190.0,200.0Z"/><path d="M10.0,280.0 C18.3,265.0 46.7,306.7 60.0,330.0 C73.3,353.3 98.3,405.0 90.0,420.0 C81.7,435.0 23.3,443.3 10.0,420.0 C-3.3,396.7 1.7,295.0 10.0,280.0Z"/><path d="M30.0,620.0 C36.7,601.7 61.7,583.3 80.0,580.0 C98.3,576.7 128.3,586.7 140.0,600.0 C151.7,613.3 158.3,643.3 150.0,660.0 C141.7,676.7 108.3,695.0 90.0,700.0 C71.7,705.0 50.0,703.3 40.0,690.0 C30.0,676.7 23.3,638.3 30.0,620.0Z"/><path d="M30.0,700.0 C38.3,693.3 56.7,726.7 60.0,760.0 C63.3,793.3 56.7,851.7 50.0,900.0 C43.3,948.3 26.7,1066.7 20.0,1050.0 C13.3,1033.3 8.3,858.3 10.0,800.0 C11.7,741.7 21.7,706.7 30.0,700.0Z"/><path d="M130.0,700.0 C138.3,671.7 180.0,646.7 190.0,680.0 C200.0,713.3 198.3,871.7 190.0,900.0 C181.7,928.3 150.0,883.3 140.0,850.0 C130.0,816.7 121.7,728.3 130.0,700.0Z"/><path d="M60.0,850.0 C65.0,833.3 105.0,916.7 120.0,950.0 C135.0,983.3 155.0,1033.3 150.0,1050.0 C145.0,1066.7 105.0,1083.3 90.0,1050.0 C75.0,1016.7 55.0,866.7 60.0,850.0Z"/></g>
<g transform="translate(100,620) scale(0.352361)"><path d="M600.0,0.0 C618.3,-36.7 680.0,-20.0 700.0,0.0 C720.0,20.0 730.0,78.3 720.0,120.0 C710.0,161.7 661.7,233.3 640.0,250.0 C618.3,266.7 596.7,261.7 590.0,220.0 C583.3,178.3 581.7,36.7 600.0,0.0Z"/><path d="M590.0,280.0 C608.3,250.0 672.5,233.3 700.0,220.0 C727.5,206.7 745.8,183.3 755.0,200.0 C764.2,216.7 772.5,286.7 755.0,320.0 C737.5,353.3 677.5,386.7 650.0,400.0 C622.5,413.3 600.0,420.0 590.0,400.0 C580.0,380.0 571.7,310.0 590.0,280.0Z"/><path d="M580.0,440.0 C580.0,428.3 650.8,416.7 680.0,420.0 C709.2,423.3 755.0,448.3 755.0,460.0 C755.0,471.7 709.2,493.3 680.0,490.0 C650.8,486.7 580.0,451.7 580.0,440.0Z"/><path d="M650.0,550.0 C659.2,536.7 737.5,535.0 755.0,560.0 C772.5,585.0 764.2,686.7 755.0,700.0 C745.8,713.3 717.5,665.0 700.0,640.0 C682.5,615.0 640.8,563.3 650.0,550.0Z"/><path d="M200.0,730.0 C218.3,715.0 306.7,736.7 330.0,730.0 C353.3,723.3 325.0,695.0 340.0,690.0 C355.0,685.0 398.3,688.3 420.0,700.0 C441.7,711.7 440.0,743.3 470.0,760.0 C500.0,776.7 585.0,783.3 600.0,800.0 C615.0,816.7 556.7,835.0 560.0,860.0 C563.3,885.0 626.7,931.7 620.0,950.0 C613.3,968.3 543.3,956.7 520.0,970.0 C496.7,983.3 533.3,1020.0 480.0,1030.0 C426.7,1040.0 263.3,1043.3 200.0,1030.0 C136.7,1016.7 108.3,975.0 100.0,950.0 C91.7,925.0 130.0,901.7 150.0,880.0 C170.0,858.3 211.7,845.0 220.0,820.0 C228.3,795.0 181.7,745.0 200.0,730.0Z"/><path d="M480.0,740.0 C486.7,730.0 526.7,716.7 540.0,720.0 C553.3,723.3 566.7,750.0 560.0,760.0 C553.3,770.0 513.3,783.3 500.0,780.0 C486.7,776.7 473.3,750.0 480.0,740.0Z"/><path d="M630.0,1000.0 C620.8,978.3 679.2,920.0 700.0,900.0 C720.8,880.0 745.8,858.3 755.0,880.0 C764.2,901.7 775.8,1010.0 755.0,1030.0 C734.2,1050.0 639.2,1021.7 630.0,1000.0Z"/></g>
<g transform="translate(1190,790) scale(0.247525)"><path d="M60.0,0.0 C83.3,-21.7 160.0,-6.7 180.0,0.0 C200.0,6.7 193.3,20.0 180.0,40.0 C166.7,60.0 123.3,105.0 100.0,120.0 C76.7,135.0 46.7,150.0 40.0,130.0 C33.3,110.0 36.7,21.7 60.0,0.0Z"/><path d="M40.0,300.0 C50.0,280.0 156.7,270.0 180.0,300.0 C203.3,330.0 190.0,460.0 180.0,480.0 C170.0,500.0 143.3,450.0 120.0,420.0 C96.7,390.0 30.0,320.0 40.0,300.0Z"/><path d="M20.0,600.0 C36.7,580.0 153.3,543.3 180.0,560.0 C206.7,576.7 196.7,680.0 180.0,700.0 C163.3,720.0 106.7,696.7 80.0,680.0 C53.3,663.3 3.3,620.0 20.0,600.0Z"/><path d="M700.0,1050.0 C613.3,1025.0 746.7,936.7 780.0,900.0 C813.3,863.3 863.3,843.3 900.0,830.0 C936.7,816.7 966.7,816.7 1000.0,820.0 C1033.3,823.3 1061.7,826.7 1100.0,850.0 C1138.3,873.3 1196.7,926.7 1230.0,960.0 C1263.3,993.3 1388.3,1035.0 1300.0,1050.0 C1211.7,1065.0 786.7,1075.0 700.0,1050.0Z"/><path d="M300.0,780.0 C311.7,761.7 406.7,758.3 450.0,760.0 C493.3,761.7 555.0,766.7 560.0,790.0 C565.0,813.3 510.0,886.7 480.0,900.0 C450.0,913.3 410.0,890.0 380.0,870.0 C350.0,850.0 288.3,798.3 300.0,780.0Z"/><path d="M1150.0,790.0 C1160.0,776.7 1228.3,761.7 1250.0,770.0 C1271.7,778.3 1290.0,826.7 1280.0,840.0 C1270.0,853.3 1211.7,858.3 1190.0,850.0 C1168.3,841.7 1140.0,803.3 1150.0,790.0Z"/><path d="M1320.0,800.0 C1331.7,766.7 1445.0,758.3 1470.0,800.0 C1495.0,841.7 1481.7,1016.7 1470.0,1050.0 C1458.3,1083.3 1425.0,1041.7 1400.0,1000.0 C1375.0,958.3 1308.3,833.3 1320.0,800.0Z"/><path d="M330.0,1050.0 C311.7,1035.0 405.0,971.7 450.0,960.0 C495.0,948.3 581.7,965.0 600.0,980.0 C618.3,995.0 605.0,1038.3 560.0,1050.0 C515.0,1061.7 348.3,1065.0 330.0,1050.0Z"/></g>
<g transform="translate(1270,450) scale(0.238095)"><path d="M520.0,50.0 C526.7,33.3 570.0,71.7 600.0,100.0 C630.0,128.3 676.7,173.3 700.0,220.0 C723.3,266.7 748.3,361.7 740.0,380.0 C731.7,398.3 680.0,360.0 650.0,330.0 C620.0,300.0 581.7,246.7 560.0,200.0 C538.3,153.3 513.3,66.7 520.0,50.0Z"/><path d="M760.0,40.0 C766.7,-5.0 776.7,13.3 800.0,30.0 C823.3,46.7 886.7,95.0 900.0,140.0 C913.3,185.0 893.3,253.3 880.0,300.0 C866.7,346.7 840.0,420.0 820.0,420.0 C800.0,420.0 770.0,363.3 760.0,300.0 C750.0,236.7 753.3,85.0 760.0,40.0Z"/><path d="M880.0,300.0 C886.7,263.3 933.3,220.0 960.0,200.0 C986.7,180.0 1030.0,166.7 1040.0,180.0 C1050.0,193.3 1040.0,240.0 1020.0,280.0 C1000.0,320.0 943.3,416.7 920.0,420.0 C896.7,423.3 873.3,336.7 880.0,300.0Z"/><path d="M900.0,420.0 C910.0,398.3 963.3,353.3 1000.0,350.0 C1036.7,346.7 1113.3,381.7 1120.0,400.0 C1126.7,418.3 1070.0,446.7 1040.0,460.0 C1010.0,473.3 963.3,486.7 940.0,480.0 C916.7,473.3 890.0,441.7 900.0,420.0Z"/><path d="M880.0,490.0 C891.7,480.0 963.3,498.3 1000.0,520.0 C1036.7,541.7 1096.7,598.3 1100.0,620.0 C1103.3,641.7 1048.3,656.7 1020.0,650.0 C991.7,643.3 953.3,606.7 930.0,580.0 C906.7,553.3 868.3,500.0 880.0,490.0Z"/><path d="M820.0,520.0 C833.3,515.0 873.3,563.3 900.0,620.0 C926.7,676.7 983.3,830.0 980.0,860.0 C976.7,890.0 906.7,835.0 880.0,800.0 C853.3,765.0 830.0,696.7 820.0,650.0 C810.0,603.3 806.7,525.0 820.0,520.0Z"/><path d="M720.0,520.0 C733.3,530.0 730.0,635.0 720.0,700.0 C710.0,765.0 680.0,893.3 660.0,910.0 C640.0,926.7 603.3,845.0 600.0,800.0 C596.7,755.0 620.0,686.7 640.0,640.0 C660.0,593.3 706.7,510.0 720.0,520.0Z"/><path d="M700.0,500.0 C710.0,503.3 633.3,563.3 600.0,600.0 C566.7,636.7 530.0,683.3 500.0,720.0 C470.0,756.7 430.0,823.3 420.0,820.0 C410.0,816.7 420.0,740.0 440.0,700.0 C460.0,660.0 496.7,613.3 540.0,580.0 C583.3,546.7 690.0,496.7 700.0,500.0Z"/><path d="M300.0,500.0 C308.3,478.3 383.3,448.3 450.0,440.0 C516.7,431.7 675.0,436.7 700.0,450.0 C725.0,463.3 650.0,500.0 600.0,520.0 C550.0,540.0 450.0,573.3 400.0,570.0 C350.0,566.7 291.7,521.7 300.0,500.0Z"/><path d="M320.0,250.0 C336.7,228.3 426.7,198.3 480.0,200.0 C533.3,201.7 600.0,236.7 640.0,260.0 C680.0,283.3 735.0,320.0 720.0,340.0 C705.0,360.0 606.7,381.7 550.0,380.0 C493.3,378.3 418.3,351.7 380.0,330.0 C341.7,308.3 303.3,271.7 320.0,250.0Z"/><path d="M680.0,340.0 C690.0,310.0 731.7,313.3 760.0,320.0 C788.3,326.7 833.3,353.3 850.0,380.0 C866.7,406.7 871.7,453.3 860.0,480.0 C848.3,506.7 806.7,536.7 780.0,540.0 C753.3,543.3 716.7,533.3 700.0,500.0 C683.3,466.7 670.0,370.0 680.0,340.0Z"/><path d="M20.0,80.0 C33.3,53.3 76.7,80.0 100.0,90.0 C123.3,100.0 143.3,140.0 160.0,140.0 C176.7,140.0 180.0,100.0 200.0,90.0 C220.0,80.0 258.3,71.7 280.0,80.0 C301.7,88.3 326.7,116.7 330.0,140.0 C333.3,163.3 321.7,200.0 300.0,220.0 C278.3,240.0 216.7,233.3 200.0,260.0 C183.3,286.7 213.3,348.3 200.0,380.0 C186.7,411.7 145.0,450.0 120.0,450.0 C95.0,450.0 66.7,413.3 50.0,380.0 C33.3,346.7 25.0,300.0 20.0,250.0 C15.0,200.0 6.7,106.7 20.0,80.0Z"/><path d="M0.0,600.0 C6.7,583.3 66.7,600.0 100.0,620.0 C133.3,640.0 175.0,681.7 200.0,720.0 C225.0,758.3 243.3,811.7 250.0,850.0 C256.7,888.3 256.7,950.0 240.0,950.0 C223.3,950.0 180.0,888.3 150.0,850.0 C120.0,811.7 85.0,761.7 60.0,720.0 C35.0,678.3 -6.7,616.7 0.0,600.0Z"/><path d="M1218.0,80.0 C1237.7,113.3 1229.3,355.0 1218.0,400.0 C1206.7,445.0 1169.7,383.3 1150.0,350.0 C1130.3,316.7 1088.7,245.0 1100.0,200.0 C1111.3,155.0 1198.3,46.7 1218.0,80.0Z"/><path d="M1020.0,660.0 C1028.3,643.3 1078.3,668.3 1100.0,700.0 C1121.7,731.7 1130.3,800.0 1150.0,850.0 C1169.7,900.0 1206.7,966.7 1218.0,1000.0 C1229.3,1033.3 1229.3,1050.0 1218.0,1050.0 C1206.7,1050.0 1178.0,1041.7 1150.0,1000.0 C1122.0,958.3 1071.7,856.7 1050.0,800.0 C1028.3,743.3 1011.7,676.7 1020.0,660.0Z"/><path d="M800.0,0.0 C853.0,-18.3 1168.0,-16.7 1218.0,0.0 C1268.0,16.7 1153.0,81.7 1100.0,100.0 C1047.0,118.3 950.0,126.7 900.0,110.0 C850.0,93.3 747.0,18.3 800.0,0.0Z"/><path d="M400.0,1050.0 C366.7,1035.0 450.0,968.3 500.0,960.0 C550.0,951.7 666.7,985.0 700.0,1000.0 C733.3,1015.0 750.0,1041.7 700.0,1050.0 C650.0,1058.3 433.3,1065.0 400.0,1050.0Z"/><path d="M200,380 L280,600 L320,800 L260,1000" fill="none" stroke="#2c2c2c" stroke-width="20" stroke-linecap="round" stroke-linejoin="round"/></g></g>
<path d="M1437,0 A293,293 0 0,1 1560,166.5 L1560,1050 L1680,1050 L1680,0 Z" fill="#2f4f4f"/>
<path d="M0,983 L1240,983 A171.5,171.5 0 0,1 1272,1050 L0,1050 Z" fill="#2f4f4f"/>
</svg>

<!-- xeyes -->
<svg class="a" style="left:228px;top:0" width="80" height="56">
<ellipse cx="19.5" cy="27.5" rx="16" ry="25" fill="#d8d8d8" stroke="#000" stroke-width="4"/>
<ellipse cx="59" cy="27.5" rx="16" ry="25" fill="#d8d8d8" stroke="#000" stroke-width="4"/>
<circle cx="27.5" cy="27.5" r="3.5" fill="#000"/>
<circle cx="67" cy="27.5" r="3.5" fill="#000"/>
</svg>

<!-- smiley panel -->
<div class="a" style="left:2px;top:300px;width:70px;height:74px;background:#5f9ea0"></div>
<div class="a" style="left:2px;top:374px;width:70px;height:76px;background:#d2b48c"></div>
<div class="a" style="left:8px;top:307px;width:57px;height:60px;background:#2f4f4f"></div>
<div class="a" style="left:8px;top:382px;width:57px;height:60px;background:#2f4f4f"></div>
<div class="a" style="left:14px;top:315px;width:45px;height:29px;background:#2f4f4f;border-top:2px solid #3f8a8a;border-left:2px solid #3f8a8a;border-right:2px solid #111e1e;border-bottom:2px solid #111e1e;color:#e8dcc0;font-size:12px;text-align:center;line-height:25px">:-(((</div>
<div class="a" style="left:14px;top:390px;width:45px;height:29px;background:#2f4f4f;border-top:2px solid #3f8a8a;border-left:2px solid #3f8a8a;border-right:2px solid #111e1e;border-bottom:2px solid #111e1e;color:#e8dcc0;font-size:12px;text-align:center;line-height:25px">;-)</div>

<!-- monitors panel -->
<div class="a" style="left:0;top:838px;width:110px;height:145px;background:#2f4f4f"></div>
<div class="a lbl" style="left:0px;top:838px">LOAD<br>CPU0<br>CPU1<br>CPU2<br>CPU3<br>MEM<br>DISK<br>SWAP<br>PAGE<br>CPU</div>
<div class="bar" style="top:840px;background:linear-gradient(90deg,#2e8b57 0 45%,#7fffd4 45%)"></div>
<div class="bar" style="top:854px"></div>
<div class="bar" style="top:868px"></div>
<div class="bar" style="top:882px"></div>
<div class="bar" style="top:896px"></div>
<div class="bar" style="top:910px;background:linear-gradient(90deg,#2e8b57 0 38%,#ff0000 38% 41%,#0000ff 41% 46%,#ffa500 46% 76%,#e8e8dc 76%)"></div>
<div class="bar" style="top:924px"></div>
<div class="bar" style="top:938px;background:#7fffd4"></div>
<div class="bar" style="top:952px;background:#7fffd4"></div>
<div class="bar" style="top:966px;background:linear-gradient(90deg,#0000ff 0 30%,#7fffd4 30% 96%,#ff0000 96%)"></div>

<!-- terminal -->
<div id="tm" class="a">
 <div class="a" style="left:1px;top:23px;width:3px;height:699px;background:#5a8a8a"></div>
 <div class="a" style="left:219px;top:23px;width:3px;height:699px;background:#5a8a8a"></div>
 <div class="a" style="left:22px;top:1px;width:180px;height:3px;background:#5a8a8a"></div>
 <div class="a" style="left:22px;top:742px;width:180px;height:3px;background:#5a8a8a"></div>
 <div id="tmtitle" class="a"><span class="a" style="left:20px;top:0">shurtcuts-f3..../.fvwm) - VII</span><span class="a tick" style="left:9px"></span><span class="a tick" style="left:168px"></span><span class="a tick" style="left:186px"></span><span class="a tick" style="left:204px"></span></div>
 <div id="tmtext" class="a mono">Alt -F1, menütaste = root-Menu
Ctrl-F1/F2/F3/F4 switch between vir
tuellen Desktop
<i class="y">Silent Key</i>=strg

<i class="y">Silent Key</i> Super_R A A <i class="y">Exec exec $[</i>
<i class="c">infostore.terminal]</i>
<i class="y">Silent Key</i> Space A M <i class="y">Exec exec </i><i class="c">$[in</i>
<i class="c">fostore.runcmd] $[infostore.runcmdo</i>
<i class="c">pt]</i>

Page Wechsel
strg   <i class="m">1</i> A C <i class="y">GotoPage</i> <i class="m">0</i> <i class="m">0</i>
strg   <i class="m">2</i> A C <i class="y">GotoPage</i> <i class="m">0</i> <i class="m">1</i>
strg   <i class="m">3</i> A C <i class="y">GotoPage</i> <i class="m">0</i> <i class="m">2</i>
strg   <i class="m">4</i> A C <i class="y">GotoPage</i> <i class="m">1</i> <i class="m">0</i>
strg   <i class="m">5</i> A C <i class="y">GotoPage</i> <i class="m">1</i> <i class="m">1</i>
strg   <i class="m">6</i> A C <i class="y">GotoPage</i> <i class="m">1</i> <i class="m">2</i>

Deskwechsel
strg F1 A C GotoDesk <i class="m">0</i> <i class="m">0</i>
strg F2 A C GotoDesk <i class="m">0</i> <i class="m">1</i>
strg F3 A C GotoDesk <i class="m">0</i> <i class="m">2</i>
strg F4 A C GotoDesk <i class="m">0</i> <i class="m">3</i>

Super_R (windows <i class="y">key</i>) rxvt
menutaste root-menu
alt-F1    root-menue root-menu

  AC = Alt+Strg
a AC audacios Wiedergabeliste1.xspf
c AC calcurse
d AC pcmanfm-qt
e AC claws-mail -<i class="tc">-</i>receive
f AC firefox -p wellensittich
g AC gvim
l AC libreoffice
m AC mc
o AC okular
p AC xpdf
r AC urxvt
v AC ~/bin/VNote3192
x AC xterm
<i class="b">~</i>
<i class="b">~</i>
<i class="b">~</i>
<i class="b">~</i>
<i class="b">~</i>
<i class="b">~</i>
<i class="b">~</i>
<i class="b">~</i>
<i class="b">~</i>
<i class="b">~</i>
<i class="b">~</i>
&lt; 829B            29,18      Alles</div>
</div>

<!-- card -->
<div class="a" style="left:639px;top:11px;width:368px;height:262px;background:#fff;overflow:hidden">
 <div class="a" style="left:6px;top:8px;width:351px;height:270px;border:4px solid #8a8a8a"></div>
 <div class="a" style="left:17px;top:18px;width:329px;height:260px;border:1px solid #8a8a8a"></div>
 <div class="a" style="left:47px;top:32px;width:9px;height:189px;background:#888;border-radius:4px 4px 0 0"></div>
 <div class="a" style="left:23px;top:71px;width:54px;height:9px;background:#888;border-radius:4px"></div>
 <div class="a" style="left:67px;top:20px;width:274px;font-size:10.7px;line-height:14px;color:#333;white-space:nowrap"><div style="text-align:justify;text-align-last:justify">Das einzige Wichtige im leben sind die Spuren der Liebe,</div><div style="text-align:justify;text-align-last:justify">die wir hinterlassen, wenn wir ungefragt weggehen und</div><div>Abschied nehmen müssen.</div></div>
 <div class="a" style="left:252px;top:62px;font-size:11px;color:#333;white-space:nowrap">Albert Schweizer</div>
 <div class="a" style="left:85px;top:81px;font-family:'Liberation Serif',serif;font-size:28px;color:#505050;white-space:nowrap">Bruno</div>
 <div class="a" style="left:88px;top:111px;letter-spacing:0.35px;font-family:'Liberation Serif',serif;font-size:12px;color:#333;white-space:nowrap">alias JJ1</div>
 <div class="a" style="left:159px;top:127px;letter-spacing:0.2px;font-family:'Liberation Serif',serif;font-size:12px;color:#333;white-space:nowrap">26. Juni 2006</div>
 <div class="a" style="left:87px;top:159px;letter-spacing:0.5px;font-family:'Liberation Serif',serif;font-size:12px;line-height:16px;color:#333;white-space:nowrap">Du hast viele aufgeweckt, bevor Dich<br>andere schlafen geschickt haben.<br><br>Danke!<br>Für viele andere.</div>
</div>

<!-- gvim -->
<div id="gv" class="a">
 <div class="a" style="left:1px;top:1px;width:24px;height:4px;background:#2a7aa5"></div>
 <div class="a" style="left:1px;top:1px;width:4px;height:22px;background:#2a7aa5"></div>
 <div class="a" style="left:805px;top:1px;width:24px;height:4px;background:#2a7aa5"></div>
 <div class="a" style="left:825px;top:1px;width:4px;height:22px;background:#2a7aa5"></div>
 <div class="a" style="left:825px;top:684px;width:4px;height:25px;background:#2a7aa5"></div>
 <div class="a" style="left:0px;top:686px;width:4px;height:21px;background:#2a7aa5"></div>
 <div class="a" style="left:0px;top:704px;width:21px;height:3px;background:#2a7aa5"></div>
 <div class="a" style="left:805px;top:705px;width:24px;height:4px;background:#2a7aa5"></div>
 <div id="gvtitle" class="a">config (~/.fvwm) - GVIM2</div>
 <div class="a" style="left:7px;top:7px;width:14px;height:14px;border:1px solid #fff"><div class="a" style="left:5px;top:5px;width:2px;height:2px;background:#fff"></div></div>
 <div class="a" style="left:773px;top:7px;width:14px;height:14px;border:1px solid #fff"><div class="a" style="left:3px;top:7px;width:6px;height:2px;background:#fff"></div></div>
 <div class="a" style="left:791px;top:7px;width:14px;height:14px;border:1px solid #fff"><div class="a" style="left:2px;top:2px;width:8px;height:8px;border:1px solid #fff"></div></div>
 <div class="a" style="left:809px;top:7px;width:14px;height:14px;border:1px solid #fff;color:#fff;font-size:12px;line-height:11px;text-align:center">&#215;</div>
 <div id="gvmenu" class="a">
  <span style="left:8px">Datei</span><span style="left:57px">Editieren</span><span style="left:128px">Werkzeuge</span><span style="left:215px">Syntax</span><span style="left:271px">Puffer</span><span style="left:327px">Ansicht</span><span style="left:388px">Hilfe</span>
 </div>
 <div id="gvtool" class="a"></div>
 <div id="gvtext" class="a mono"><span class="cur">#</span>#################################
#  ____________________________
# (   _________________________)
#  ) (__  _  _  _    _
# (   __)( \/ )( \/\/ )/\/\
#  ) (    \  /  \    //    \
# (___)    \/    \/\/(_/\/\_) 3
#
#
#  This is the default configuration file shipped with fvwm.
#
#  This config file is organized as follows:
#
#    1: Functions
#    2: Styles
#    3: Colorsets
#    4: Menus
#    5: Bindings
#    6: Decor
#    7: Modules
#
##############

##############
#
# InfoStoreAdd can be used to store variable data internal to fvwm.
# The variable can then be used in the configuration as $[infostore.name].
#
# You can also use environment variables but for data internal to fvwm
# use InfoStore variables instead.
#
<span class="st">&quot;.fvwm/config&quot; 1336L, 54306B                                  1,1        Anfang</span></div>
 <div id="gvscroll" class="a"><div class="a" style="left:4px;top:3px;width:8px;height:40px;background:#858585;border-radius:4px"></div></div>
</div>

<svg class="a" style="left:370px;top:322px" width="820" height="43" viewBox="370 322 820 43">
<g fill="none" stroke="#2e3436" stroke-width="2" stroke-linecap="round" stroke-linejoin="round">
<!-- folder open -->
<path d="M385,349 V339.5 a1.5,1.5 0 0 1 1.5,-1.5 h4 l2,2 h5 a1.5,1.5 0 0 1 1.5,1.5 V342"/>
<path d="M385,349 l2.5,-6 a1.5,1.5 0 0 1 1.4,-1 h10.5 a1,1 0 0 1 0.9,1.4 l-2.6,5.6 a1.5,1.5 0 0 1 -1.4,0.9 h-11.3"/>
<!-- download -->
<path d="M429,337 V348 M424.5,343.5 L429,348 L433.5,343.5"/>
<path d="M423,351.5 H435" stroke-width="2"/>
<!-- undo -->
<path d="M547,344 h10 a3.5,3.5 0 0 1 0,7 h-1 M551,339.5 L547,344 L551,348.5"/>
<!-- redo -->
<path d="M598,344 h-10 a3.5,3.5 0 0 0 0,7 h1 M594,339.5 L598,344 L594,348.5"/>
<!-- paste -->
<rect x="710" y="338.5" width="12" height="13" rx="2"/>
<path d="M713.5,338 h5 v2 h-5 z" fill="#2e3436"/>
<!-- spell pencil -->
<path d="M768,338.5 a6,6 0 1 0 -5,10"/>
<path d="M772,340 l-9,9 v2 h2 l9,-9 z M769,349 l3,3"/>
<!-- > < -->
<path d="M801,338 L807,344 L801,350" stroke-width="2.2"/>
<path d="M844,338 L838,344 L844,350" stroke-width="2.2"/>
<!-- gear -->
<circle cx="968" cy="342" r="3.2" stroke-width="2.2"/>
<circle cx="960" cy="349" r="1.6" stroke-width="1.5"/>
<!-- curved arrow -->
<path d="M1087,352 V343 a5,5 0 0 1 10,0 v3 M1093.5,343.5 l3.5,3.5 l3.5,-3.5" stroke-width="2.2"/>
<!-- chevron -->
<path d="M1164,342.5 l5,4.5 l5,-4.5" stroke-width="2"/>
</g>
<g fill="none" stroke="#949494" stroke-width="1.8" stroke-linecap="round">
<!-- scissors -->
<circle cx="637.5" cy="340.5" r="2.5"/>
<circle cx="641" cy="349" r="2.5"/>
<path d="M640,341.5 h10 M642,347 l7,-9"/>
<!-- copy -->
<rect x="677" y="341" width="9" height="10" rx="2"/>
<path d="M674,347 a2,2 0 0 1 -2,-2 v-6 a2,2 0 0 1 2,-2 h6 a2,2 0 0 1 2,2"/>
</g>
<!-- gear teeth -->
<g fill="#2e3436">
<path d="M968,336.5 l1.2,0 l0.5,1.8 l1.6,0.7 l1.6,-1 l0.9,0.9 l-1,1.6 l0.7,1.6 l1.8,0.5 v1.2 l-1.8,0.5 l-0.7,1.6 l1,1.6 l-0.9,0.9 l-1.6,-1 l-1.6,0.7 l-0.5,1.8 h-1.2 l-0.5,-1.8 l-1.6,-0.7 l-1.6,1 l-0.9,-0.9 l1,-1.6 l-0.7,-1.6 l-1.8,-0.5 v-1.2 l1.8,-0.5 l0.7,-1.6 l-1,-1.6 l0.9,-0.9 l1.6,1 l1.6,-0.7 z" transform="translate(-0.6,0)"/>
</g>
<circle cx="967.6" cy="342.8" r="2" fill="#f5f4f2"/>
<!-- printer -->
<path d="M498,339 h10 v-2 h-10 z" fill="#2e3436"/>
<path d="M496,341 h14 a2,2 0 0 1 2,2 v5 a2,2 0 0 1 -2,2 h-1 v-3 h-12 v3 h-1 a2,2 0 0 1 -2,-2 v-5 a2,2 0 0 1 2,-2 z" fill="#2e3436"/>
<rect x="498.5" y="348" width="9" height="3" fill="#2e3436"/>
<!-- floppy -->
<rect x="458.5" y="336.5" width="15" height="15" rx="1" fill="#5a7a9a" stroke="#33485e"/>
<rect x="461" y="337" width="10" height="7" fill="#f0f0f0"/>
<rect x="461" y="337" width="10" height="2" fill="#e8846a"/>
<rect x="462" y="347" width="8" height="4" fill="#c0c0c0"/>
<!-- folder gear -->
<path d="M884,339 h5 l1.5,1.5 h8 v10 h-14.5 z" fill="#8a8a80" stroke="#555" stroke-width="0.8"/>
<path d="M884,342 h14.5 v8.5 h-14.5 z" fill="#c8c8bc"/>
<circle cx="895" cy="348" r="3.5" fill="#444"/><circle cx="895" cy="348" r="1.3" fill="#ccc"/>
<!-- floppy gear -->
<rect x="921.5" y="338.5" width="14" height="13" rx="1" fill="#6a88a4" stroke="#3a5068"/>
<rect x="924" y="339" width="8" height="5" fill="#f0f0f0"/>
<rect x="924" y="339" width="8" height="1.5" fill="#e8846a"/>
<rect x="924.5" y="347" width="7" height="4" fill="#c0c0c0"/>
<circle cx="933" cy="339.5" r="3.5" fill="#444"/><circle cx="933" cy="339.5" r="1.3" fill="#ccc"/>
<!-- diamond + red dot -->
<path d="M1013,336 l4,6 l-4,6 l-4,-6 z" fill="#3b82c4" stroke="#1e4f80" stroke-width="0.8"/>
<path d="M1018,338 h3 v4 M1019.5,340.5 l1.5,1.5 l1.5,-1.5" fill="none" stroke="#222" stroke-width="1.2"/>
<circle cx="1021" cy="348" r="3" fill="#e02030"/>
<!-- grid -->
<g fill="none" stroke="#555" stroke-width="1">
<rect x="1048.5" y="338.5" width="12" height="12"/>
<path d="M1051.5,338.5 v12 M1054.5,338.5 v12 M1057.5,338.5 v12 M1048.5,341.5 h12 M1048.5,344.5 h12 M1048.5,347.5 h12"/>
</g>
<!-- separators -->
<g stroke="#d8d6d2" stroke-width="1">
<path d="M528.5,327 V361 M616.5,327 V361 M741.5,327 V361 M866.5,327 V361 M991.5,327 V361 M1116.5,327 V361"/>
</g>
</svg>

<!-- steuerrung -->
<div id="st" class="a">
 <div id="sttitle" class="a">STEUERRUNG<span class="a tick" style="left:7px"></span><span class="a tick" style="left:274px"></span><span class="a tick" style="left:292px"></span><span class="a tick" style="left:310px"></span></div>
</div>
<div class="sb" style="left:1235px;top:818px;width:45px;height:20px">Menu</div>
<div class="sb" style="left:1280px;top:818px;width:92px;height:20px">Logdatein</div>
<div class="sb" style="left:1372px;top:818px;width:91px;height:80px"><svg style="position:absolute;left:0px;top:15px" width="129" height="53" viewBox="0 0 110 45">
<defs><linearGradient id="lg2" x1="0" y1="0" x2="0" y2="1"><stop offset="0" stop-color="#1238b8"/><stop offset="1" stop-color="#3ab0ea"/></linearGradient></defs>
<g fill="none" stroke="#0a1a30" stroke-width="5.2" stroke-linecap="butt" stroke-linejoin="round" opacity="0.8">
<path d="M6,6.5 C13,10 19,18 27,18.5 C36,19 45,7 57,7 C66,7 71,10 75,15"/>
<path d="M28.5,19 V37.5 M28.5,29 H40"/>
<path d="M43,15 L49,37 L55,11"/>
<path d="M57,10 L61.5,37 L65.5,23 L70.5,37 L75.5,15"/>
<path d="M79,37.5 V15 L88.5,26 L99.5,14 V25 L95,37.5"/>
</g>
<g fill="none" stroke="url(#lg2)" stroke-width="3.4" stroke-linecap="butt" stroke-linejoin="round">
<path d="M6,6.5 C13,10 19,18 27,18.5 C36,19 45,7 57,7 C66,7 71,10 75,15"/>
<path d="M28.5,19 V37.5 M28.5,29 H40"/>
<path d="M43,15 L49,37 L55,11"/>
<path d="M57,10 L61.5,37 L65.5,23 L70.5,37 L75.5,15"/>
<path d="M79,37.5 V15 L88.5,26 L99.5,14 V25 L95,37.5"/>
</g>
</svg>
</div>
<div class="sb" style="left:1463px;top:818px;width:92px;height:20px">Restart</div>
<div class="sb" style="left:1235px;top:838px;width:45px;height:20px">Ops</div>
<div class="sb" style="left:1280px;top:838px;width:46px;height:20px"></div>
<div class="sb" style="left:1326px;top:838px;width:46px;height:20px">f3 origlo</div>
<div class="sb" style="left:1463px;top:838px;width:46px;height:20px">Panel</div>
<div class="sb" style="left:1509px;top:838px;width:46px;height:20px">off</div>
<div class="sb" style="left:1235px;top:858px;width:45px;height:20px"></div>
<div class="sb" style="left:1280px;top:858px;width:46px;height:20px"></div>
<div class="sb" style="left:1326px;top:858px;width:46px;height:20px">xsess</div>
<div class="sb" style="left:1463px;top:858px;width:46px;height:20px">mBar</div>
<div class="sb" style="left:1509px;top:858px;width:46px;height:20px">off</div>
<div class="sb" style="left:1235px;top:878px;width:45px;height:20px"></div>
<div class="sb" style="left:1280px;top:878px;width:46px;height:20px"></div>
<div class="sb" style="left:1326px;top:878px;width:46px;height:20px">f3log</div>
<div class="sb" style="left:1463px;top:878px;width:46px;height:20px">xosview</div>
<div class="sb" style="left:1509px;top:878px;width:46px;height:20px">off</div>
<div class="sb" style="left:1235px;top:898px;width:45px;height:20px"></div>
<div class="sb" style="left:1280px;top:898px;width:92px;height:20px">Bilder Show</div>
<div class="sb" style="left:1372px;top:898px;width:91px;height:20px">Kino</div>
<div class="sb" style="left:1463px;top:898px;width:92px;height:20px">Musikbox</div>
<div class="sb" style="left:1235px;top:918px;width:45px;height:20px"></div>
<div class="sb" style="left:1280px;top:918px;width:92px;height:20px"></div>
<div class="sb" style="left:1372px;top:918px;width:91px;height:20px"></div>
<div class="sb" style="left:1463px;top:918px;width:92px;height:20px">LxQT Panel</div>
<div class="sb" style="left:1235px;top:938px;width:45px;height:20px">Gesang</div>
<div class="sb" style="left:1280px;top:938px;width:46px;height:20px">Bilder</div>
<div class="sb" style="left:1326px;top:938px;width:46px;height:20px"></div>
<div class="sb" style="left:1372px;top:938px;width:46px;height:20px"></div>
<div class="sb" style="left:1418px;top:938px;width:45px;height:20px">lxqt+</div>
<div class="sb" style="left:1463px;top:938px;width:46px;height:20px">shurt</div>
<div class="sb" style="left:1509px;top:938px;width:46px;height:20px">sd_</div>
<div class="sb" style="left:1235px;top:958px;width:45px;height:20px">Spiel</div>
<div class="sb" style="left:1280px;top:958px;width:46px;height:20px">Filme No</div>
<div class="sb" style="left:1326px;top:958px;width:46px;height:20px">rxvt</div>
<div class="sb" style="left:1372px;top:958px;width:46px;height:20px">Console</div>
<div class="sb" style="left:1418px;top:958px;width:45px;height:20px">BGroun</div>
<div class="sb" style="left:1463px;top:958px;width:46px;height:20px">Refresh</div>
<div class="sb" style="left:1509px;top:958px;width:46px;height:20px">Off</div>

<!-- right column -->
<svg class="a" style="left:1565px;top:0" width="110" height="45" viewBox="0 0 110 45">
<defs><linearGradient id="lg1" x1="0" y1="0" x2="0" y2="1"><stop offset="0" stop-color="#1238b8"/><stop offset="1" stop-color="#3ab0ea"/></linearGradient></defs>
<g fill="none" stroke="#0a1a30" stroke-width="5.2" stroke-linecap="butt" stroke-linejoin="round" opacity="0.8">
<path d="M6,6.5 C13,10 19,18 27,18.5 C36,19 45,7 57,7 C66,7 71,10 75,15"/>
<path d="M28.5,19 V37.5 M28.5,29 H40"/>
<path d="M43,15 L49,37 L55,11"/>
<path d="M57,10 L61.5,37 L65.5,23 L70.5,37 L75.5,15"/>
<path d="M79,37.5 V15 L88.5,26 L99.5,14 V25 L95,37.5"/>
</g>
<g fill="none" stroke="url(#lg1)" stroke-width="3.4" stroke-linecap="butt" stroke-linejoin="round">
<path d="M6,6.5 C13,10 19,18 27,18.5 C36,19 45,7 57,7 C66,7 71,10 75,15"/>
<path d="M28.5,19 V37.5 M28.5,29 H40"/>
<path d="M43,15 L49,37 L55,11"/>
<path d="M57,10 L61.5,37 L65.5,23 L70.5,37 L75.5,15"/>
<path d="M79,37.5 V15 L88.5,26 L99.5,14 V25 L95,37.5"/>
</g>
</svg>

<svg class="a" style="left:1560px;top:60px" width="120" height="210" viewBox="1560 60 120 210">
<path d="M1614.5,76.5 h11" stroke="#ccc" stroke-width="1" stroke-dasharray="3,1"/>
<rect x="1565" y="112" width="50" height="42" fill="#006666"/>
<g fill="none" stroke="#d8d8d8" stroke-width="1.5">
<rect x="1567.5" y="116" width="6" height="30.5"/>
<rect x="1572" y="112.5" width="4" height="4"/>
<rect x="1566" y="118" width="2" height="6"/>
<rect x="1576.5" y="123.5" width="27" height="27" fill="#1f6a96"/>
<rect x="1605.5" y="144.5" width="9" height="6"/>
<rect x="1566" y="149" width="12" height="5"/>
<rect x="1615.5" y="112.5" width="3.5" height="41"/>
<rect x="1620.5" y="112.5" width="50" height="41"/>
<rect x="1565.5" y="159" width="48.5" height="32.5"/>
<rect x="1566" y="154.5" width="3.5" height="3.5"/>
<rect x="1629.5" y="154.5" width="27.5" height="34"/>
</g>
<g stroke="#d8d8d8" stroke-width="1.2" stroke-dasharray="3,2.5">
<path d="M1565,154.5 h108"/>
<path d="M1565,197.5 h108"/>
<path d="M1620.5,156 v80"/>
</g>
<use href="#vim" x="1582" y="129" width="16" height="16"/>
<use href="#ffx" x="1637" y="125" width="16" height="16"/>
<use href="#claws" x="1582" y="168" width="15" height="15"/>
<use href="#vim" x="1636" y="163" width="16" height="16"/>
</svg>

<div class="a" style="left:1515px;top:20px;width:15px;height:15px;background:#00ff00"></div>
<div class="a" style="left:1530px;top:20px;width:15px;height:15px;background:#f2d8b8"></div>
<div class="a" style="left:1530px;top:35px;width:15px;height:15px;background:#d8d8d8"></div>

<div class="a" style="left:1570px;top:85px;width:25px;height:26px;background:#1f6a96"></div>
<div class="a" style="left:1560px;top:92px;width:120px;font-style:italic;color:#e8e8e8;font-size:13px">
 <span class="a" style="left:18px">0</span><span class="a" style="left:43px">1</span><span class="a" style="left:68px">2</span><span class="a" style="left:93px">3</span>
</div>

<div class="tk" style="top:266px"><span style="margin-left:22px">deskto.ps – Mozilla Firefox</span></div>
<div class="tk" style="top:286px;background:#2a4a5c;color:#9ab"><span style="margin-left:18px">vh@anton: ~</span></div>
<div class="tk" style="top:306px"><span style="margin-left:18px">OFFON</span></div>
<div class="tk" style="top:326px;background:#2a4a5c;color:#9ab"><span style="margin-left:18px">vh@anton: ~</span></div>
<div class="tk" style="top:346px"><span style="margin-left:22px">v.hauke - Claws Mail</span></div>
<div class="tk" style="top:366px"><span style="margin-left:18px">shurtcuts-f3..../.fvwm</span></div>
<div class="tk" style="top:386px"><span style="margin-left:22px">[Unbenannt] + - GVIM</span></div>
<div class="tk" style="top:406px;background:#1f6a96;color:#fff"><span style="margin-left:22px">config (~/.fvwm) - GVIM2</span></div>
<div class="tk" style="top:426px"><span style="margin-left:18px">vh@anton: ~</span></div>
<div class="tk" style="top:446px;background:#2a4a5c;color:#9ab"><span style="margin-left:18px">vh@anton: ~</span></div>

<svg class="a" style="left:1560px;top:240px" width="120" height="230" viewBox="1560 240 120 230">
<rect x="1560.5" y="246.5" width="119" height="20" fill="none" stroke="#c0c0c0" stroke-width="1.2"/>
<path d="M1592,250 a5,5 0 1 1 -4,8 a4,4 0 0 0 6,-2 a3,3 0 0 0 -2,-6" fill="#2a8ad0"/>
<path d="M1589,256 a4,4 0 0 0 5,4" fill="none" stroke="#ddd" stroke-width="1.2"/>
<path d="M1603.5,253.5 h3 l4,-4 v14 l-4,-4 h-3 z" fill="#000"/>
<path d="M1612.5,253 a3.5,3.5 0 0 1 0,6 M1615,250.5 a6.5,6.5 0 0 1 0,11" fill="none" stroke="#000" stroke-width="1.5"/>
<path d="M1622,249 h14 v14.5 h-9 l-5,-4.5 z" fill="#f5e68c"/>
<path d="M1641,256 l2,-4 h9 l2,4 v7 h-13 z" fill="#c8c8c8" stroke="#777" stroke-width="0.7"/>
<path d="M1642,257 h3 v2 h5 v-2 h3" fill="none" stroke="#666" stroke-width="0.8"/>
<use href="#vicon" x="1658" y="248" width="14" height="16"/>
<use href="#ffx" x="1564" y="268" width="16" height="16"/>
<use href="#claws" x="1563" y="348" width="15" height="15"/>
<use href="#vim" x="1563" y="388" width="16" height="16"/>
<use href="#vim" x="1563" y="408" width="16" height="16"/>
</svg>

<div class="rt" style="top:871px;line-height:15px">Elster Abfrage<br>audio mute prüfen<br>intrinsisch erklären<br>Dateioeffnungen menu<br>Iconpath verbessern</div>
<div class="a" style="left:1596px;top:954px;width:48px;height:1px;background:#aaa"></div>
<div class="rt" style="top:968px;font-size:14px;font-style:italic">20:34</div>
<div class="rt" style="top:989px;line-height:15px;font-size:11px">Mo. 13 Okt. 2025<br>42. Woche</div>
<div class="a" style="left:1596px;top:1035px;width:48px;height:1px;background:#aaa"></div>
<div class="rt" style="top:1039px;font-size:9px">53 Monate</div>

<!-- bottom panel -->
<div class="a" style="left:1227px;top:998px;width:24px;height:33px;background:#2f4f4f;border-top:2px solid #3f8585;border-left:2px solid #3f8585;border-right:2px solid #162626;border-bottom:2px solid #162626"></div>
<svg class="a" style="left:1231px;top:1003px" width="16" height="22"><path d="M12,2.5 A7.5,8.5 0 1 0 12,19.5" fill="none" stroke="#253838" stroke-width="2"/><path d="M8,10 l3,3 l2,-3" fill="none" stroke="#253838" stroke-width="1.2"/></svg>
<svg class="a" style="left:550px;top:983px" width="510" height="67" viewBox="550 983 510 67">
<!-- menu -->
<g fill="#1f1f1f"><rect x="558" y="992" width="12" height="3"/><rect x="558" y="998" width="12" height="3"/><rect x="558" y="1004" width="12" height="3"/><path d="M572,998 h6 l-3,3.5 z"/></g>
<!-- terminal 1 -->
<rect x="621" y="990" width="28" height="22" rx="1.5" fill="#4b4b4b"/>
<path d="M624.5,993 l4,4 l-4,4" fill="none" stroke="#22cc22" stroke-width="1.8"/>
<rect x="629" y="1001" width="6" height="2" fill="#22cc22"/>
<!-- blue grid -->
<rect x="691" y="988" width="22" height="22" fill="#3aa0ff"/>
<g stroke="#0a4a9a" stroke-width="0.7" fill="none"><path d="M693,992 h18 M693,996 h18 M693,1000 h18 M693,1004 h18 M697,990 v17 M702,990 v17 M707,990 v17"/></g>
<rect x="691" y="1007" width="22" height="3" fill="#1a7a6a"/>
<!-- claws -->
<use href="#claws" x="759" y="987" width="22" height="23"/>
<!-- firefox -->
<use href="#ffx" x="824" y="987" width="24" height="24"/>
<!-- calendar -->
<path d="M890,1011 l3,-18 h20 l3,18 z" fill="#c8a070"/>
<rect x="893" y="993" width="20" height="16" fill="#f0f0f0" stroke="#aaa" stroke-width="0.6"/>
<rect x="898" y="988" width="2.5" height="7" fill="#bbb"/><rect x="906" y="988" width="2.5" height="7" fill="#bbb"/>
<text x="900" y="1006" font-size="9" fill="#555" font-family="Liberation Sans">3</text>
<!-- vim -->
<use href="#vim" x="958" y="987" width="24" height="24"/>
<!-- speaker -->
<path d="M1026,995 h5 l6,-5 v20 l-6,-5 h-5 z" fill="#000" stroke="#fff" stroke-width="1.5"/>
<path d="M1039,994 a7,7 0 0 1 0,12 M1042,991 a10,10 0 0 1 0,18" fill="none" stroke="#000" stroke-width="2.2"/>
<path d="M1039,994 a7,7 0 0 1 0,12 M1042,991 a10,10 0 0 1 0,18" fill="none" stroke="#fff" stroke-width="0.6" opacity="0.6"/>
<!-- moon -->
<rect x="556" y="1023" width="24" height="19" fill="#000"/>
<circle cx="568" cy="1032.5" r="7.5" fill="#c8c8c8"/>
<circle cx="566" cy="1030" r="2" fill="#999"/><circle cx="571" cy="1035" r="1.5" fill="#aaa"/>
<!-- terminal 2 -->
<rect x="621.5" y="1022.5" width="27" height="23" fill="#2a2a2a" stroke="#d8d8d8" stroke-width="1.2"/>
<path d="M624,1026 l3,2 l-3,2 M627,1031 h3" fill="none" stroke="#eee" stroke-width="1"/>
<!-- V -->
<use href="#vicon" x="760" y="1022" width="18" height="21"/>
<!-- brave -->
<path d="M830,1026 l3,-1.5 h6 l3,1.5 l1,3 l-2,8 l-5,4 l-5,-4 l-2,-8 z" fill="#fb542b"/>
<path d="M833,1029 h6 l-1,3 h-4 z M834,1034 h4 l-2,3 z" fill="#fff"/>
<!-- gimp -->
<path d="M893,1034 c0,-5 4,-9 9,-9 c3,0 5,1 7,3 l2,-6 c2,3 2,7 1,10 c0,3 -1,5 -3,7 l2,4 c-3,-1 -5,-2 -7,-2 c-5,0 -9,-3 -11,-7 z" fill="#111" stroke="#eee" stroke-width="1.2"/>
<circle cx="900" cy="1031" r="1.5" fill="#ddd"/><circle cx="905" cy="1031" r="1.5" fill="#ddd"/>
<!-- doc -->
<path d="M963.5,1025.5 h9 l4.5,4.5 v10.5 h-13.5 z" fill="#e8e8e8" stroke="#777" stroke-width="1"/>
<!-- alsa -->
<ellipse cx="1037" cy="1033" rx="11.5" ry="5.8" fill="#cde0e0" stroke="#333" stroke-width="1"/>
<text x="1029" y="1036.5" font-size="6.5" font-weight="bold" fill="#333" font-family="Liberation Sans">ALSA</text>
</svg>

<div class="a sm" style="left:125px;top:986px;width:150px;text-align:center;color:#ddd;line-height:15px;white-space:nowrap;font-size:9px">/dev/sdb2 47% /<br>/dev/sdb3 27% /mnt/daten<br>23G /…//mnt/daten/vh/<br>13G /…//home/vh/</div>
<div class="a sm" style="left:275px;top:996px;color:#ddd;line-height:15px;white-space:nowrap;font-size:9px"><i style="font-style:italic">18470 Home</i><br>2375 Daten<br>20846 Gesamtdateien</div>
<svg class="a" style="left:0;top:983px" width="130" height="67" viewBox="0 983 130 67">
<path transform="translate(8,0) scale(1.06,1) translate(-8,0)" d="M8,1012 V1002 l3,2 l2,-1 l3,1 l2,-1 l3,1 l2,-6 l2,4 l2,-1 l2,-5 l3,3 l3,1 l3,2 l3,2 l3,-7 l3,3 l3,2 l3,1 l3,-6 l3,3 l2,-1 l3,2 l3,-8 l3,4 l3,2 l3,3 l3,2 l3,-5 l3,2 l3,3 l2,1 l3,-1 l3,1 l3,1 l2,-1 l3,-2 l2,1 l2,-6 l3,2 l2,-1 l3,1 l3,-2 V1012 z" fill="#c9ad96"/>
<rect x="4" y="1020.5" width="122" height="25" fill="#fff" stroke="#000" stroke-width="1"/>
<rect x="4" y="1045" width="125" height="2" fill="#000"/>
<g stroke="#22dd22" stroke-width="1"><path d="M10.5,1021 v24 M33.5,1021 v24 M56.5,1021 v24 M79.5,1021 v24 M102.5,1021 v24"/></g>
<g stroke="#2233cc" stroke-width="1"><path d="M14.5,1041 v4 M38.5,1042 v3 M83.5,1042 v3 M106.5,1041 v4 M10.5,1021 v2 M33.5,1021 v2 M56.5,1021 v2 M79.5,1021 v2 M102.5,1021 v2"/></g>
</svg>
<div class="a sm" style="left:672px;top:1026px;color:#ddd;font-size:11px">rxvt</div>

</body></html>
